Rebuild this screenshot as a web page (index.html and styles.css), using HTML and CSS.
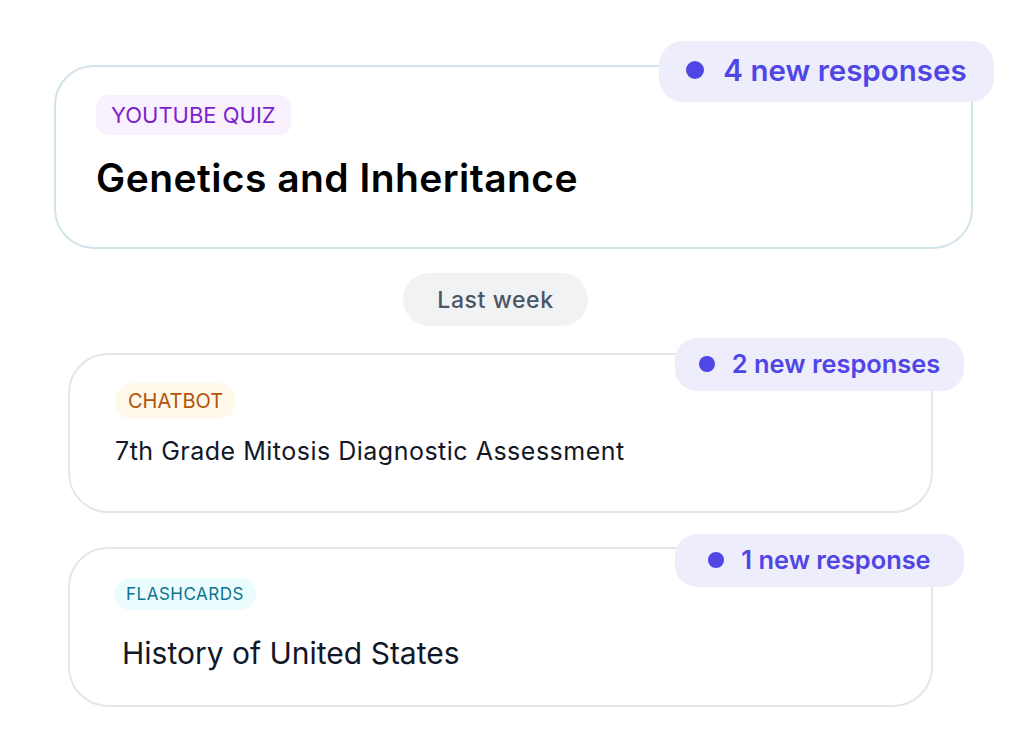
FILE: index.html
```html
<!DOCTYPE html>
<html>
<head>
<meta charset="utf-8">
<link rel="stylesheet" href="styles.css">
</head>
<body>
<main class="feed">
  <article class="card card-main">
    <div class="badge badge-lg"><span class="dot"></span><span>4 new responses</span></div>
    <span class="tag tag-quiz">YOUTUBE QUIZ</span>
    <h2 class="title title-lg">Genetics and Inheritance</h2>
  </article>

  <div class="divider"><span class="pill">Last week</span></div>

  <article class="card card-sub card-chat">
    <div class="badge badge-sm badge-two"><span class="dot"></span><span>2 new responses</span></div>
    <span class="tag tag-chat">CHATBOT</span>
    <h2 class="title title-md">7th Grade Mitosis Diagnostic Assessment</h2>
  </article>

  <article class="card card-sub card-flash">
    <div class="badge badge-sm badge-one"><span class="dot"></span><span>1 new response</span></div>
    <span class="tag tag-flash">FLASHCARDS</span>
    <h2 class="title title-xl">History of United States</h2>
  </article>
</main>
</body>
</html>
```
FILE: styles.css
```css
* { box-sizing: border-box; }
html, body { margin: 0; padding: 0; background: #ffffff; }
body {
  font-family: Inter, "Noto Sans", "Liberation Sans", sans-serif;
  width: 1024px;
  height: 755px;
  overflow: hidden;
}
.feed {
  display: flex;
  flex-direction: column;
  align-items: flex-start;
  padding-top: 65px;
}
.card {
  position: relative;
  background: #fff;
  display: flex;
  flex-direction: column;
  align-items: flex-start;
  border-radius: 40px;
}
.card-main {
  margin-left: 54px;
  width: 919px;
  height: 184px;
  border: 2px solid #d3e3ea;
  padding: 28px 40px 0 40px;
}
.card-sub {
  margin-left: 68px;
  width: 865px;
  height: 160px;
  border: 2px solid #e3e6ec;
}
.card-chat { padding: 28px 45px 0 45px; margin-top: 27px; }
.card-flash { padding: 29px 44px 0 44px; margin-top: 34px; }

.tag {
  display: inline-block;
  white-space: nowrap;
}
.tag-quiz {
  font-size: 22px;
  line-height: 28px;
  padding: 6px 15px;
  border-radius: 12px;
  background: #f9f2fe;
  color: #7e22ce;
  font-weight: 400;
}
.tag-chat {
  font-size: 20px;
  line-height: 24px;
  padding: 6px 13px;
  border-radius: 18px;
  background: #fef9ea;
  color: #b45309;
}
.tag-flash {
  font-size: 17px;
  line-height: 22px;
  padding: 5px 12px;
  border-radius: 16px;
  background: #eafcfd;
  color: #0e7490;
  letter-spacing: 0.5px;
}

.title { margin: 0; white-space: nowrap; }
.title-lg {
  font-size: 39px;
  line-height: 46px;
  font-weight: 600;
  color: #000;
  margin-top: 20px;
  letter-spacing: 0.45px;
}
.title-md {
  font-size: 25px;
  line-height: 32px;
  font-weight: 400;
  color: #111827;
  margin-top: 16px;
  letter-spacing: 0.5px;
}
.title-xl {
  font-size: 30px;
  line-height: 38px;
  font-weight: 400;
  color: #111827;
  margin-top: 24px;
  margin-left: 8px;
}

.divider {
  margin-top: 24px;
  margin-left: 403px;
}
.pill {
  display: flex;
  align-items: center;
  justify-content: center;
  width: 185px;
  height: 53px;
  border-radius: 27px;
  background: #f1f2f4;
  color: #4b5563;
  font-size: 23px;
  font-weight: 500;
  letter-spacing: 0.6px;
}

.badge {
  position: absolute;
  display: flex;
  align-items: center;
  justify-content: center;
  background: #eeedfc;
  color: #4f46e5;
  font-weight: 600;
  white-space: nowrap;
}
.badge-lg {
  top: -26px;
  right: -23px;
  width: 335px;
  height: 61px;
  border-radius: 24px;
  font-size: 29.5px;
  gap: 19px;
  padding-bottom: 3px;
}
.badge-lg .dot { width: 18px; height: 18px; }
.badge-sm {
  right: -33px;
  width: 289px;
  height: 53px;
  border-radius: 22px;
  font-size: 25.4px;
  gap: 17px;
  padding-bottom: 2px;
}
.badge-two { top: -17px; }
.badge-one { top: -15px; }
.badge-sm .dot { width: 16px; height: 16px; }
.dot {
  display: block;
  border-radius: 50%;
  background: #4f46e5;
  flex: none;
}
```
